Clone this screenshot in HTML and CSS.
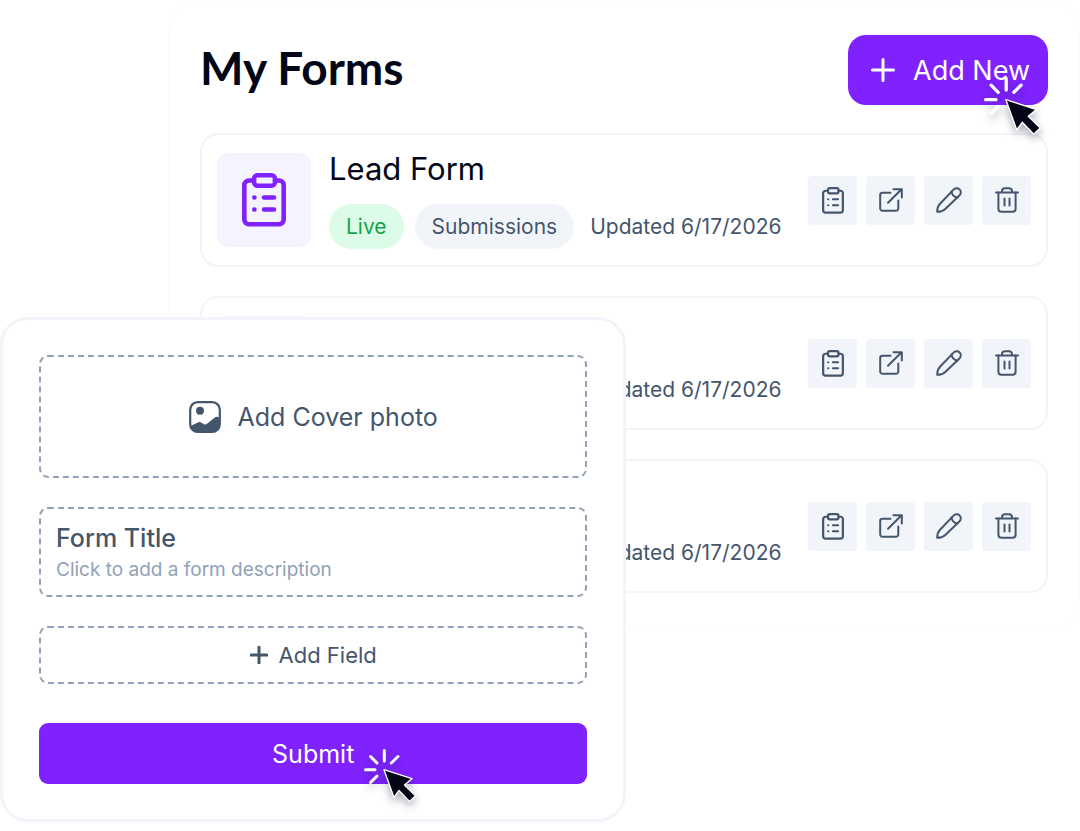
FILE: index.html
```html
<!DOCTYPE html>
<html lang="en">
<head>
    <meta charset="UTF-8">
    <meta name="viewport" content="width=device-width, initial-scale=1.0">
    <title>My Forms</title>
    <link rel="stylesheet" href="styles.css">
</head>
<body>
    <!-- shared icons -->
    <svg class="sprite" aria-hidden="true">
        <symbol id="icon-clipboard" viewBox="0 0 44 54">
            <rect x="12" y="2.3" width="21" height="10.4" rx="3.5"/>
            <path d="M12 7.5H7A4.7 4.7 0 0 0 2.3 12.2V46.5A4.7 4.7 0 0 0 7 51.2H37A4.7 4.7 0 0 0 41.7 46.5V12.2A4.7 4.7 0 0 0 37 7.5H33"/>
            <path d="M12.3 24.5h.1M12.3 36.5h.1M22 24.5H32M22 36.5H32"/>
        </symbol>
        <symbol id="icon-open" viewBox="0 0 24 24">
            <path d="M11.5 4.7H3.5A2.3 2.3 0 0 0 1.2 7V20.5A2.3 2.3 0 0 0 3.5 22.8H17A2.3 2.3 0 0 0 19.3 20.5V12.5"/>
            <path d="M9 14.8L22.3 1.5M14.5 1.2H22.8V9.5"/>
        </symbol>
        <symbol id="icon-edit" viewBox="0 0 26 26">
            <path d="M17.8 2.4A4.1 4.1 0 0 1 23.6 8.2L9.3 22Q6.5 24.8 1.2 24.8Q1.2 19.6 4 16.7Z"/>
            <path d="M15.6 4.6Q16.2 9.8 21.4 10.4"/>
        </symbol>
        <symbol id="icon-trash" viewBox="0 0 24 26">
            <path d="M1 5.5H23M7 5.5V4A3 3 0 0 1 10 1.2H14A3 3 0 0 1 17 4V5.5"/>
            <path d="M3.4 5.5V21.8A3 3 0 0 0 6.4 24.8H17.6A3 3 0 0 0 20.6 21.8V5.5M9.5 11.5V18.5M14.5 11.5V18.5"/>
        </symbol>
        <symbol id="icon-plus" viewBox="0 0 24 24">
            <path d="M12 1.5V22.5M1.5 12H22.5"/>
        </symbol>
        <symbol id="icon-cursor" viewBox="0 0 54 54">
            <path class="rays" d="M20.3 1.5V12M6.5 7.5L13 14M34 7.5L27.3 14M1.5 20.8H11M13 27L6.5 33.5"/>
            <path class="arrow" d="M20 20.7L48 29.7L40.5 36L51.5 46.7L45.5 52.5L35 41.5L30 48.5Z"/>
        </symbol>
    </svg>

    <div class="page">
        <main class="panel">
            <header class="panel-header">
                <h1>My Forms</h1>
                <button type="button" class="add-new-btn">
                    <svg class="icon"><use href="#icon-plus"/></svg>
                    Add New
                    <svg class="cursor"><use href="#icon-cursor"/></svg>
                </button>
            </header>

            <div class="form-list">
                <article class="form-row">
                    <div class="form-thumb"><svg><use href="#icon-clipboard"/></svg></div>
                    <div class="form-info">
                        <h2>Lead Form</h2>
                        <div class="form-meta">
                            <span class="badge live">Live</span>
                            <a class="badge" href="#">Submissions</a>
                            <span class="updated">Updated 6/17/2026</span>
                        </div>
                    </div>
                    <div class="actions">
                        <button type="button" aria-label="Submissions"><svg class="clip"><use href="#icon-clipboard"/></svg></button>
                        <button type="button" aria-label="Open"><svg class="open"><use href="#icon-open"/></svg></button>
                        <button type="button" aria-label="Edit"><svg><use href="#icon-edit"/></svg></button>
                        <button type="button" aria-label="Delete"><svg><use href="#icon-trash"/></svg></button>
                    </div>
                </article>

                <article class="form-row">
                    <div class="form-thumb"><svg><use href="#icon-clipboard"/></svg></div>
                    <div class="form-info">
                        <h2>Lead Form</h2>
                        <div class="form-meta">
                            <span class="badge live">Live</span>
                            <a class="badge" href="#">Submissions</a>
                            <span class="updated">Updated 6/17/2026</span>
                        </div>
                    </div>
                    <div class="actions">
                        <button type="button" aria-label="Submissions"><svg class="clip"><use href="#icon-clipboard"/></svg></button>
                        <button type="button" aria-label="Open"><svg class="open"><use href="#icon-open"/></svg></button>
                        <button type="button" aria-label="Edit"><svg><use href="#icon-edit"/></svg></button>
                        <button type="button" aria-label="Delete"><svg><use href="#icon-trash"/></svg></button>
                    </div>
                </article>

                <article class="form-row">
                    <div class="form-thumb"><svg><use href="#icon-clipboard"/></svg></div>
                    <div class="form-info">
                        <h2>Lead Form</h2>
                        <div class="form-meta">
                            <span class="badge live">Live</span>
                            <a class="badge" href="#">Submissions</a>
                            <span class="updated">Updated 6/17/2026</span>
                        </div>
                    </div>
                    <div class="actions">
                        <button type="button" aria-label="Submissions"><svg class="clip"><use href="#icon-clipboard"/></svg></button>
                        <button type="button" aria-label="Open"><svg class="open"><use href="#icon-open"/></svg></button>
                        <button type="button" aria-label="Edit"><svg><use href="#icon-edit"/></svg></button>
                        <button type="button" aria-label="Delete"><svg><use href="#icon-trash"/></svg></button>
                    </div>
                </article>
            </div>
        </main>

        <!-- form builder, floats over the list -->
        <form class="builder">
            <button type="button" class="dashed cover-btn">
                <svg class="photo" viewBox="0 0 32 32">
                    <rect x="1.2" y="1.2" width="29.6" height="29.6" rx="7.5" fill="none" stroke="currentColor" stroke-width="2.2"/>
                    <circle cx="11" cy="9.8" r="4" fill="currentColor"/>
                    <path fill="currentColor" d="M1.5 25L9.5 21.3Q11 20.7 12.5 21.8L15 23.3Q16.5 24 18 22.8L25.5 16.8Q27.5 15.3 29.5 16.2L31 17V23.5A7.5 7.5 0 0 1 23.5 31H8.5A7.5 7.5 0 0 1 1.5 25Z"/>
                </svg>
                Add Cover photo
            </button>
            <div class="dashed title-box">
                <input type="text" class="title-input" aria-label="Form title" placeholder="Form Title">
                <input type="text" class="desc-input" aria-label="Form description" placeholder="Click to add a form description">
            </div>
            <button type="button" class="dashed field-btn">
                <svg class="icon"><use href="#icon-plus"/></svg>
                Add Field
            </button>
            <button type="submit" class="submit-btn">
                Submit
                <svg class="cursor"><use href="#icon-cursor"/></svg>
            </button>
        </form>
    </div>
</body>
</html>
```
FILE: styles.css
```css
* {
    box-sizing: border-box;
}
body {
    margin: 0;
    background-color: #fff;
    color: #020617;
    font-family: Inter, "Liberation Sans", sans-serif;
}
button, input {
    font-family: inherit;
    color: inherit;
}
button {
    border: none;
    padding: 0;
    cursor: pointer;
}
svg {
    display: block;
    fill: none;
    stroke: currentColor;
    stroke-linecap: round;
    stroke-linejoin: round;
}
.sprite {
    position: absolute;
    width: 0;
    height: 0;
}
.page {
    position: relative;
    min-height: 831px;
}
.panel {
    margin-left: 168px;
    padding: 34px 31px 37px;
    border: 1px solid #fafbfd;
    border-radius: 32px;
}
.panel-header {
    display: flex;
    justify-content: space-between;
    align-items: center;
    margin-bottom: 28px;
}
h1 {
    margin: 0 0 4px;
    font-family: Lato, sans-serif;
    font-size: 46px;
    font-weight: 700;
    line-height: 48px;
}
.add-new-btn {
    position: relative;
    display: flex;
    align-items: center;
    gap: 18px;
    height: 70px;
    padding: 0 18px 0 23px;
    border-radius: 18px;
    background-color: #7f22fe;
    color: #fff;
    font-size: 27px;
}
.add-new-btn .icon {
    width: 24px;
    height: 24px;
    stroke-width: 3;
}

/* cursor drawn over a button */
.cursor {
    position: absolute;
    overflow: visible;
    filter: drop-shadow(0 4px 4px rgba(15, 23, 42, 0.35));
}
.rays {
    stroke: #fff;
    stroke-width: 3;
}
.arrow {
    fill: #020617;
    stroke: #fff;
    stroke-width: 1.3;
}
.add-new-btn .cursor {
    top: 42px;
    right: 5px;
    width: 59px;
    height: 59px;
}
.submit-btn .cursor {
    top: 26px;
    left: calc(50% + 51px);
    width: 54px;
    height: 54px;
}

.form-list {
    display: flex;
    flex-direction: column;
    gap: 29px;
}
.form-row {
    display: flex;
    align-items: center;
    padding: 16px 15px;
    min-height: 134px;
    border: 2px solid #f1f5f9;
    border-radius: 18px;
}
.form-thumb {
    display: flex;
    align-items: center;
    justify-content: center;
    flex-shrink: 0;
    width: 94px;
    height: 94px;
    border-radius: 11px;
    background-color: #f5f3ff;
    color: #7f22fe;
}
.form-thumb svg {
    width: 44px;
    height: 54px;
    stroke-width: 4.6;
}
.form-info {
    margin-left: 18px;
    white-space: nowrap;
}
h2 {
    margin: 0 0 17px;
    font-size: 31px;
    font-weight: 400;
    line-height: 36px;
}
.form-meta {
    display: flex;
    align-items: center;
    color: #45556c;
    font-size: 21px;
}
.badge {
    height: 45px;
    margin-right: 11px;
    padding: 0 17px;
    border-radius: 23px;
    background-color: #f1f5f9;
    color: #45556c;
    line-height: 45px;
    text-decoration: none;
}
.badge.live {
    background-color: #dcfce7;
    color: #16a34a;
}
.updated {
    margin-left: 5px;
}
.actions {
    display: flex;
    gap: 9px;
    margin-left: auto;
}
.actions button {
    display: flex;
    align-items: center;
    justify-content: center;
    width: 49px;
    height: 49px;
    border-radius: 4px;
    background-color: #f1f5f9;
    color: #45556c;
}
.actions svg {
    width: 26px;
    height: 26px;
    stroke-width: 2;
}
.actions .clip {
    height: 27px;
    stroke-width: 4.4;
}
.actions .open {
    width: 24px;
    height: 24px;
}

.builder {
    position: absolute;
    top: 317px;
    left: 0;
    display: flex;
    flex-direction: column;
    gap: 29px;
    width: 58%;
    padding: 35px 36px;
    border: 3px solid #f1f5f9;
    border-radius: 28px;
    background-color: #fff;
    color: #45556c;
}
.dashed {
    border: 2px dashed #90a1b9;
    border-radius: 9px;
    background-color: transparent;
}
.cover-btn {
    display: flex;
    align-items: center;
    justify-content: center;
    gap: 17px;
    height: 123px;
    font-size: 25px;
}
.photo {
    width: 32px;
    height: 32px;
    stroke: none;
}
.title-box {
    display: flex;
    flex-direction: column;
    padding: 12px 15px;
}
.title-box input {
    width: 100%;
    padding: 0;
    border: none;
    outline: none;
    background: transparent;
}
.title-input {
    height: 34px;
    font-size: 25px;
    font-weight: 500;
}
.title-input::placeholder {
    color: #45556c;
}
.desc-input {
    height: 28px;
    font-size: 19px;
}
.desc-input::placeholder {
    color: #90a1b9;
}
.field-btn {
    display: flex;
    align-items: center;
    justify-content: center;
    gap: 11px;
    height: 58px;
    font-size: 22px;
}
.field-btn .icon {
    width: 18px;
    height: 18px;
    stroke-width: 4;
}
.submit-btn {
    position: relative;
    height: 61px;
    margin-top: 10px;
    border-radius: 9px;
    background-color: #7f22fe;
    color: #fff;
    font-size: 25px;
}
```
